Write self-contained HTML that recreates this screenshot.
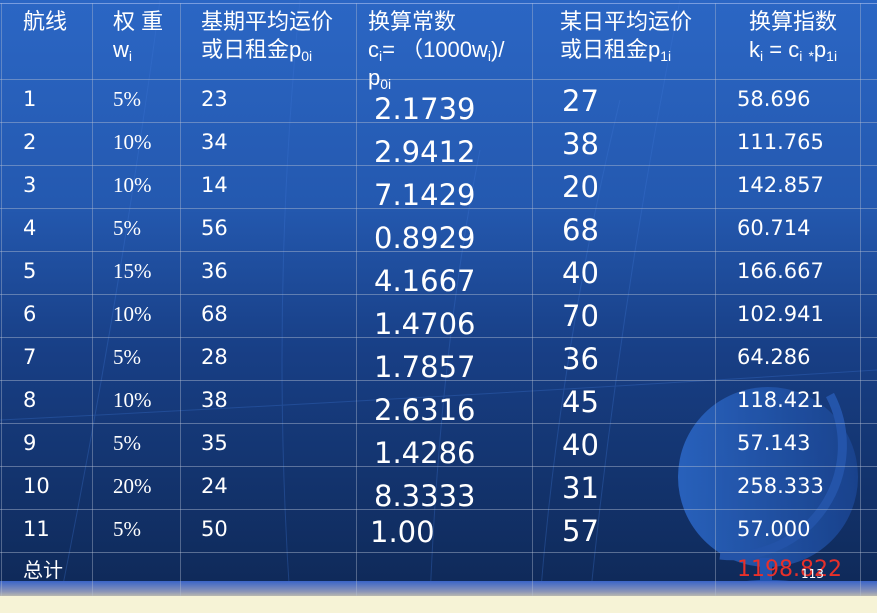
<!DOCTYPE html>
<html><head><meta charset="utf-8"><style>
body{margin:0;width:877px;height:613px;overflow:hidden;position:relative;font-family:"DejaVu Sans","Liberation Sans","Noto Sans CJK SC",sans-serif;color:#fff}
#bg{position:absolute;left:0;top:0;width:877px;height:581px;background:linear-gradient(#2b66c4 0%,#2459b0 35%,#183f86 60%,#0f2a5a 100%)}
#band{position:absolute;left:0;top:581px;width:877px;height:15px;background:linear-gradient(#3a64c8,#8a94b8 70%,#b8b8b0)}
#cream{position:absolute;left:0;top:596px;width:877px;height:17px;background:#f6f3d6}
.h{position:absolute;left:0;width:877px;height:1px;background:rgba(180,190,210,.45)}
.v{position:absolute;top:3px;height:593px;width:1px;background:rgba(180,190,210,.4)}
.t{position:absolute;white-space:nowrap;font-size:21px;line-height:22px}
.hd{font-family:"Liberation Sans","Noto Sans CJK SC",sans-serif;font-size:22px;line-height:28px}
.p{font-family:"Liberation Serif","DejaVu Serif",serif;font-size:21px}
.big{font-size:29px}
sub{font-size:14px;vertical-align:-4px;line-height:0}
</style></head><body>
<div id="bg"></div>
<svg style="position:absolute;left:0;top:0" width="877" height="613">
<g fill="none" stroke="#3f78d6" stroke-width="1" opacity=".3">
<path d="M60 600 Q120 300 160 0"/><path d="M290 600 Q270 300 300 0"/><path d="M430 600 Q440 350 480 150"/><path d="M540 600 Q560 350 620 100"/><path d="M590 600 Q620 300 680 0"/><path d="M0 420 Q400 400 877 370"/>
</g>
<defs><linearGradient id="g" x1="0" x2="1"><stop offset="0" stop-color="#2b66c4"/><stop offset="1" stop-color="#1a4490"/></linearGradient></defs>
<g opacity=".9">
<circle cx="768" cy="477" r="90" fill="url(#g)"/>
<path d="M830 395 A110 110 0 0 1 720 555" fill="none" stroke="#2658b0" stroke-width="9"/>
<ellipse cx="768" cy="588" rx="45" ry="8" fill="#2458b8"/>
<rect x="760" y="558" width="12" height="28" fill="#2458b8"/>
</g>
</svg>
<div id="band"></div><div id="cream"></div>
<div class="h" style="top:3px;background:rgba(140,170,230,.8)"></div>
<div class="h" style="top:79px"></div><div class="h" style="top:122px"></div><div class="h" style="top:165px"></div><div class="h" style="top:208px"></div><div class="h" style="top:251px"></div><div class="h" style="top:294px"></div><div class="h" style="top:337px"></div><div class="h" style="top:380px"></div><div class="h" style="top:423px"></div><div class="h" style="top:466px"></div><div class="h" style="top:509px"></div><div class="h" style="top:552px"></div>
<div class="v" style="left:1px"></div><div class="v" style="left:92px"></div><div class="v" style="left:180px"></div><div class="v" style="left:356px"></div><div class="v" style="left:532px"></div><div class="v" style="left:715px"></div><div class="v" style="left:860px"></div>

<div class="t hd" style="left:23px;top:8px">航线</div>
<div class="t hd" style="left:113px;top:8px">权 重<br>w<sub>i</sub></div>
<div class="t hd" style="left:201px;top:8px">基期平均运价<br>或日租金p<sub>0i</sub></div>
<div class="t hd" style="left:368px;top:8px">换算常数<br>c<sub>i</sub>= （1000w<sub>i</sub>)/<br>p<sub>0i</sub></div>
<div class="t hd" style="left:560px;top:8px">某日平均运价<br>或日租金p<sub>1i</sub></div>
<div class="t hd" style="left:749px;top:8px">换算指数<br>k<sub>i</sub> = c<sub>i</sub> <sub>*</sub>p<sub>1i</sub></div>

<div style="position:absolute;left:0;top:88px">
<div class="t" style="left:23px;top:0">1</div><div class="t p" style="left:113px;top:0">5%</div><div class="t" style="left:201px;top:0">23</div><div class="t big" style="left:374px;top:10px">2.1739</div><div class="t big" style="left:562px;top:2px">27</div><div class="t" style="left:737px;top:0">58.696</div>
</div>
<div style="position:absolute;left:0;top:131px">
<div class="t" style="left:23px;top:0">2</div><div class="t p" style="left:113px;top:0">10%</div><div class="t" style="left:201px;top:0">34</div><div class="t big" style="left:374px;top:10px">2.9412</div><div class="t big" style="left:562px;top:2px">38</div><div class="t" style="left:737px;top:0">111.765</div>
</div>
<div style="position:absolute;left:0;top:174px">
<div class="t" style="left:23px;top:0">3</div><div class="t p" style="left:113px;top:0">10%</div><div class="t" style="left:201px;top:0">14</div><div class="t big" style="left:374px;top:10px">7.1429</div><div class="t big" style="left:562px;top:2px">20</div><div class="t" style="left:737px;top:0">142.857</div>
</div>
<div style="position:absolute;left:0;top:217px">
<div class="t" style="left:23px;top:0">4</div><div class="t p" style="left:113px;top:0">5%</div><div class="t" style="left:201px;top:0">56</div><div class="t big" style="left:374px;top:10px">0.8929</div><div class="t big" style="left:562px;top:2px">68</div><div class="t" style="left:737px;top:0">60.714</div>
</div>
<div style="position:absolute;left:0;top:260px">
<div class="t" style="left:23px;top:0">5</div><div class="t p" style="left:113px;top:0">15%</div><div class="t" style="left:201px;top:0">36</div><div class="t big" style="left:374px;top:10px">4.1667</div><div class="t big" style="left:562px;top:2px">40</div><div class="t" style="left:737px;top:0">166.667</div>
</div>
<div style="position:absolute;left:0;top:303px">
<div class="t" style="left:23px;top:0">6</div><div class="t p" style="left:113px;top:0">10%</div><div class="t" style="left:201px;top:0">68</div><div class="t big" style="left:374px;top:10px">1.4706</div><div class="t big" style="left:562px;top:2px">70</div><div class="t" style="left:737px;top:0">102.941</div>
</div>
<div style="position:absolute;left:0;top:346px">
<div class="t" style="left:23px;top:0">7</div><div class="t p" style="left:113px;top:0">5%</div><div class="t" style="left:201px;top:0">28</div><div class="t big" style="left:374px;top:10px">1.7857</div><div class="t big" style="left:562px;top:2px">36</div><div class="t" style="left:737px;top:0">64.286</div>
</div>
<div style="position:absolute;left:0;top:389px">
<div class="t" style="left:23px;top:0">8</div><div class="t p" style="left:113px;top:0">10%</div><div class="t" style="left:201px;top:0">38</div><div class="t big" style="left:374px;top:10px">2.6316</div><div class="t big" style="left:562px;top:2px">45</div><div class="t" style="left:737px;top:0">118.421</div>
</div>
<div style="position:absolute;left:0;top:432px">
<div class="t" style="left:23px;top:0">9</div><div class="t p" style="left:113px;top:0">5%</div><div class="t" style="left:201px;top:0">35</div><div class="t big" style="left:374px;top:10px">1.4286</div><div class="t big" style="left:562px;top:2px">40</div><div class="t" style="left:737px;top:0">57.143</div>
</div>
<div style="position:absolute;left:0;top:475px">
<div class="t" style="left:23px;top:0">10</div><div class="t p" style="left:113px;top:0">20%</div><div class="t" style="left:201px;top:0">24</div><div class="t big" style="left:374px;top:10px">8.3333</div><div class="t big" style="left:562px;top:2px">31</div><div class="t" style="left:737px;top:0">258.333</div>
</div>
<div style="position:absolute;left:0;top:518px">
<div class="t" style="left:23px;top:0">11</div><div class="t p" style="left:113px;top:0">5%</div><div class="t" style="left:201px;top:0">50</div><div class="t big" style="left:370px;top:3px">1.00</div><div class="t big" style="left:562px;top:2px">57</div><div class="t" style="left:737px;top:0">57.000</div>
</div>
<div class="t hd" style="left:23px;top:557px;font-size:20px">总计</div>
<div class="t" style="left:737px;top:559px;color:#e8302a;font-size:22px">1198.822</div>
<div class="t" style="left:801px;top:563px;font-size:12px">113</div>
</body></html>
